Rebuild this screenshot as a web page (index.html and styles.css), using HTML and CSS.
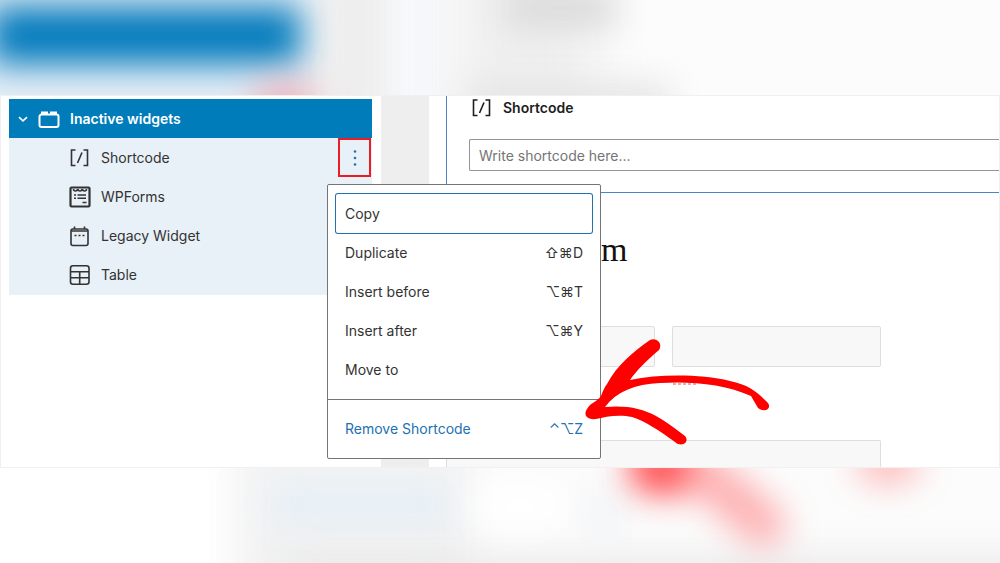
FILE: index.html
```html
<!DOCTYPE html>
<html lang="en">
<head>
  <meta charset="UTF-8">
  <meta name="viewport" content="width=device-width, initial-scale=1.0">
  <title>Inactive widgets</title>
  <link rel="stylesheet" href="styles.css">
</head>
<body>
  <!-- soft backdrop above and below the editor -->
  <svg class="backdrop" viewBox="0 0 1000 563" preserveAspectRatio="none" aria-hidden="true">
    <defs>
      <filter id="soft" x="-100%" y="-150%" width="300%" height="400%" color-interpolation-filters="sRGB"><feGaussianBlur stdDeviation="17"/></filter>
      <filter id="wide" x="-100%" y="-150%" width="300%" height="400%" color-interpolation-filters="sRGB"><feGaussianBlur stdDeviation="22"/></filter>
    </defs>
    <rect width="1000" height="563" fill="#fcfcfc"/>
    <rect x="-60" y="-60" width="380" height="240" fill="#e4eef7" filter="url(#soft)"/>
    <rect x="315" y="-60" width="80" height="240" fill="#eeeeee" filter="url(#soft)"/>
    <rect x="400" y="-60" width="45" height="240" fill="#f5f7fb" filter="url(#soft)"/>
    <rect x="455" y="-60" width="140" height="240" fill="#f0f0f0" filter="url(#wide)"/>
    <rect x="505" y="-12" width="110" height="40" fill="#dadada" filter="url(#soft)"/>
    <rect x="470" y="84" width="200" height="40" fill="#e4e4e4" filter="url(#soft)"/>
    <rect x="-10" y="7" width="310" height="57" fill="#0079bb" filter="url(#soft)"/>
    <rect x="255" y="82" width="60" height="50" fill="#f0a9b2" opacity=".8" filter="url(#soft)"/>
    <rect x="-60" y="440" width="280" height="200" fill="#ffffff" filter="url(#soft)"/>
    <rect x="240" y="420" width="230" height="220" fill="#f3f3f3" filter="url(#soft)"/>
    <rect x="268" y="484" width="185" height="42" fill="#e6eff6" filter="url(#soft)"/>
    <rect x="280" y="562" width="780" height="60" fill="#e6e6e6" filter="url(#wide)"/>
    <ellipse cx="520" cy="505" rx="50" ry="22" fill="#ffffff" filter="url(#soft)"/>
    <rect x="590" y="490" width="30" height="40" fill="#eff1f6" filter="url(#soft)"/>
    <path d="M655 462L705 475L764 525" fill="none" stroke="#ff7c7f" stroke-width="42" stroke-linecap="round" stroke-linejoin="round" opacity=".62" filter="url(#soft)"/>
    <ellipse cx="660" cy="468" rx="30" ry="26" fill="#ff3a3d" opacity=".85" filter="url(#soft)"/>
    <path d="M700 452H880" fill="none" stroke="#ffb0b0" stroke-width="24" filter="url(#soft)"/>
    <ellipse cx="888" cy="464" rx="32" ry="20" fill="#ff9a9a" opacity=".7" filter="url(#soft)"/>
  </svg>

  <main class="editor">
    <aside class="sidebar">
      <div class="tree">
        <button class="area" type="button" aria-expanded="true">
          <svg class="chevron" viewBox="0 0 10 10"><path d="M1 3.200l4 3.600 4-3.600"/></svg>
          <svg class="icon" viewBox="0 0 22 22"><path d="M3.500 6.500h15a2 2 0 0 1 2 2v8.500a2 2 0 0 1-2 2h-15a2 2 0 0 1-2-2V8.500a2 2 0 0 1 2-2zM4 6.500V4.500h5V6.500M13 6.500V4.500h5V6.500" stroke-width="2"/></svg>
          <span>Inactive widgets</span>
        </button>
        <ul class="widgets">
          <li class="widget">
            <svg class="icon" viewBox="0 0 22 22"><path d="M6.500 3H2.500v15.500h4M14.500 3h4v15.500h-4M13 5.500L8.500 16"/></svg>
            <span>Shortcode</span>
            <button class="more" type="button" aria-label="Options" aria-expanded="true">
              <svg viewBox="0 0 4 18"><circle cx="2" cy="2.500" r="1.300"/><circle cx="2" cy="9" r="1.300"/><circle cx="2" cy="15.500" r="1.300"/></svg>
            </button>
          </li>
          <li class="widget">
            <svg class="icon" viewBox="0 0 22 22"><rect x="1.500" y="1.500" width="19" height="19" rx="1" stroke-width="2.200"/><path d="M4.500 3a2 2 0 0 0 4 0M9 3a2 2 0 0 0 4 0M13.500 3a2 2 0 0 0 4 0M5 9h2M8.500 9h8.500M5 12.300h2M8.500 12.300h8.500M13.500 16.500h4"/></svg>
            <span>WPForms</span>
          </li>
          <li class="widget">
            <svg class="icon" viewBox="0 0 22 22"><rect x="2" y="4" width="17" height="16.500" rx="2"/><path d="M2.500 6h16M5.500 1.500V4M15.500 1.500V4"/><path d="M5.500 10.500h2M9.500 10.500h2M13.500 10.500h2"/></svg>
            <span>Legacy Widget</span>
          </li>
          <li class="widget">
            <svg class="icon" viewBox="0 0 22 22"><rect x="1.500" y="1.700" width="18.500" height="18.600" rx="2.500"/><path d="M2 7.800h18M2 13.800h18M10.700 7.800V20"/></svg>
            <span>Table</span>
          </li>
        </ul>
      </div>

      <div class="menu" role="menu">
        <div class="menu-group">
          <button class="menu-item focused" type="button" role="menuitem">Copy</button>
          <button class="menu-item" type="button" role="menuitem">Duplicate <kbd>⇧⌘D</kbd></button>
          <button class="menu-item" type="button" role="menuitem">Insert before <kbd>⌥⌘T</kbd></button>
          <button class="menu-item" type="button" role="menuitem">Insert after <kbd>⌥⌘Y</kbd></button>
          <button class="menu-item" type="button" role="menuitem">Move to</button>
        </div>
        <div class="menu-group">
          <button class="menu-item remove" type="button" role="menuitem">Remove Shortcode <kbd>⌃⌥Z</kbd></button>
        </div>
      </div>
    </aside>

    <div class="gutter"></div>

    <section class="canvas">
      <div class="block">
        <label class="block-label" for="shortcode">
          <svg class="icon" viewBox="0 0 22 22"><path d="M6.500 3H2.500v15.500h4M14.500 3h4v15.500h-4M13 5.500L8.500 16"/></svg>
          Shortcode
        </label>
        <input class="shortcode" id="shortcode" type="text" placeholder="Write shortcode here...">
      </div>
      <h2 class="form-title">m</h2>
      <form class="form">
        <input class="field" type="text" aria-label="First" disabled>
        <input class="field" type="text" aria-label="Last" disabled>
        <input class="field wide" type="text" aria-label="Email" disabled>
      </form>
    </section>

    <svg class="arrow" viewBox="580 335 195 115" aria-hidden="true">
      <path d="M587 409C591 402 597 402 601 396C603 391 604 388 607 384C617 365 633 352 650 340C657 337 663 344 659 350C646 361 637 370 630 380C660 374 700 374 730 381C750 385 758 393 768 403C772 409 765 413 758 408L751 396C725 384 690 381 660 383C635 384 616 392 605 407C625 405 642 408 656 416C668 423 676 429 685 436C690 442 682 448 675 442C660 431 645 421 632 417C618 414 605 417 596 419C587 420 583 415 587 409z"/>
      <path class="dashes" d="M673 384h25"/>
    </svg>
  </main>
</body>
</html>
```
FILE: styles.css
```css
* {
  box-sizing: border-box;
}

body {
  position: relative;
  display: flex;
  flex-direction: column;
  justify-content: center;
  min-height: 100vh;
  margin: 0;
  overflow-x: hidden;
  font-family: Inter, "Liberation Sans", sans-serif;
  font-size: 14px;
  line-height: 20px;
  color: #333;
}

button,
input {
  font: inherit;
  color: inherit;
}

.backdrop {
  position: absolute;
  top: 0;
  left: 0;
  width: 100%;
  height: 100%;
}

.editor {
  position: relative;
  display: flex;
  background: #fff;
  border: 1px solid #f0f0f0;
}

/* widget list */
.sidebar {
  position: relative;
  flex: none;
  width: 371px;
  padding: 3px 0 0 8px;
}

.tree {
  background: #e8f0f8;
}

.area {
  display: flex;
  align-items: center;
  width: 100%;
  height: 39px;
  padding: 0 9px;
  border: 0;
  background: #007cba;
  color: #fff;
  font-weight: 600;
}

.icon {
  width: 22px;
  height: 22px;
  margin-right: 10px;
  flex: none;
  fill: none;
  stroke: currentColor;
  stroke-width: 1.6;
}

.chevron {
  width: 10px;
  height: 10px;
  margin-right: 10px;
  fill: none;
  stroke: currentColor;
  stroke-width: 1.6;
}

.widgets {
  margin: 0;
  padding: 0 0 1px;
  list-style: none;
}

.widget {
  display: flex;
  align-items: center;
  height: 39px;
  padding-left: 60px;
}

.more {
  display: flex;
  align-items: center;
  justify-content: center;
  width: 33px;
  height: 39px;
  margin-right: 1px;
  margin-left: auto;
  padding: 0;
  border: 2px solid #ec1c24;
  background: transparent;
}

.more svg {
  width: 4px;
  height: 18px;
  fill: #2271b1;
}

/* dropdown */
.menu {
  position: absolute;
  z-index: 2;
  top: 88px;
  left: 326px;
  width: 274px;
  border: 1px solid #757575;
  border-radius: 2px;
  background: #fff;
}

.menu-group {
  padding: 9px 8px 10px;
}

.menu-group + .menu-group {
  border-top: 1px solid #757575;
}

.menu-item {
  display: flex;
  align-items: center;
  justify-content: space-between;
  width: 100%;
  height: 39px;
  padding: 0 9px;
  border: 0;
  border-radius: 2px;
  background: none;
  text-align: left;
}

.menu-item kbd {
  font-family: Inter, "DejaVu Sans", sans-serif;
}

.focused {
  box-shadow: 0 0 0 1px #2271b1;
}

.remove {
  color: #2271b1;
}

/* editor area */
.gutter {
  flex: none;
  width: 48px;
  margin-left: 9px;
  background: #eee;
}

.canvas {
  flex: 1;
  min-width: 0;
  margin-left: 17px;
}

.block {
  height: 97px;
  padding-left: 22px;
  border: solid #4a86c5;
  border-width: 0 0 1px 1px;
}

.block-label {
  display: flex;
  align-items: center;
  height: 24px;
  padding-left: 2px;
  color: #1e1e1e;
  font-weight: 600;
}

.shortcode {
  width: 100%;
  height: 32px;
  margin-top: 19px;
  padding: 0 9px;
  border: 1px solid #949494;
  border-right: 0;
  border-radius: 2px 0 0 2px;
  background: #fff;
}

.shortcode::placeholder {
  color: #757575;
  opacity: 1;
}

.form-title {
  margin: 37px 0;
  padding-left: 155px;
  color: #111;
  font-family: "Liberation Serif", serif;
  font-size: 34px;
  font-weight: 400;
  line-height: 40px;
}

.form {
  display: grid;
  grid-template-columns: 1fr 1fr;
  gap: 73px 17px;
  max-width: 435px;
  padding-top: 19px;
}

.field {
  width: 100%;
  height: 41px;
  border: 1px solid #dedede;
  border-radius: 2px;
  background: #f8f8f8;
}

.wide {
  grid-column: 1 / -1;
  height: 27px;
  border-bottom: 0;
  border-radius: 2px 2px 0 0;
}

/* pointer drawn over the menu */
.arrow {
  position: absolute;
  z-index: 3;
  top: 239px;
  left: 579px;
  width: 195px;
  height: 115px;
  fill: #fe0000;
  pointer-events: none;
}

.dashes {
  stroke: #d95050;
  stroke-width: 1;
  stroke-dasharray: 3 2;
}
```
